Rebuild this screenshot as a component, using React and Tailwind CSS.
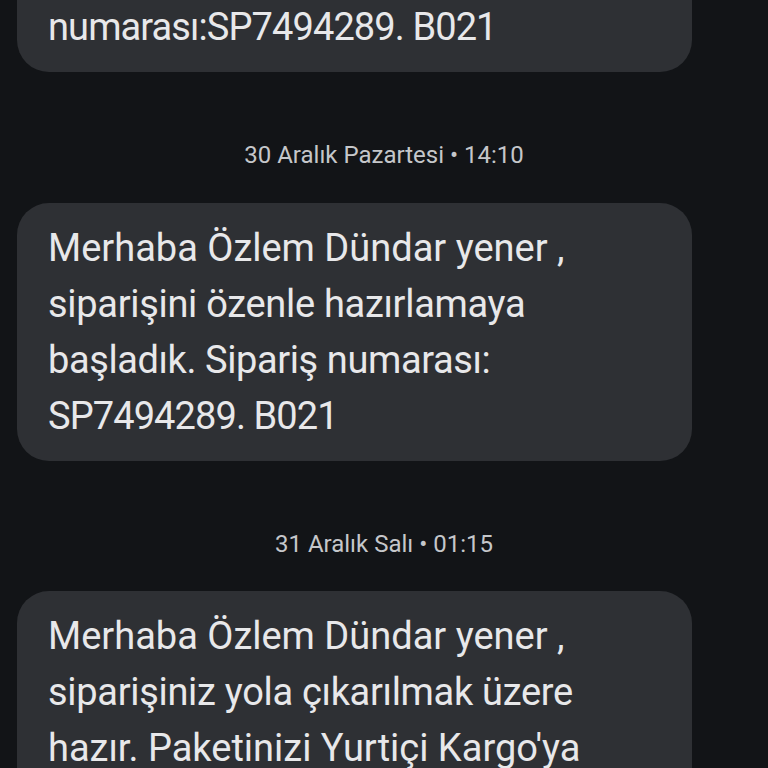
export default function App() {
  const font = { fontFamily: "Roboto, 'Noto Sans', sans-serif" };
  return (
    <div className="w-[768px] h-[768px] overflow-hidden bg-[#121417]" style={font}>
      <div className="flex flex-col -mt-[60px]">
        <div className="ml-[17px] w-[675px] rounded-[32px] bg-[#2e3034] pl-[31px] pr-[24px] pt-[59px] pb-[17px] text-[38px] leading-[56px] tracking-[-0.9px] text-[#e8e8ea]">
          numarası:SP7494289. B021
        </div>
        <div className="mt-[67px] h-[32px] flex items-center justify-center text-[24px] leading-[32px] text-[#c5c7ca]">
          30 Aralık Pazartesi • 14:10
        </div>
        <div className="mt-[32px] ml-[17px] w-[675px] rounded-[32px] bg-[#2e3034] pl-[31px] pr-[24px] py-[17px] text-[38px] leading-[56px] text-[#e8e8ea]">
          <div>Merhaba Özlem Dündar yener ,</div>
          <div className="tracking-[-0.3px]">siparişini özenle hazırlamaya</div>
          <div className="tracking-[-0.4px]">başladık. Sipariş numarası:</div>
          <div className="tracking-[-0.9px]">SP7494289. B021</div>
        </div>
        <div className="mt-[67px] h-[32px] flex items-center justify-center text-[24px] leading-[32px] text-[#c5c7ca]">
          31 Aralık Salı • 01:15
        </div>
        <div className="mt-[31px] ml-[17px] w-[675px] rounded-[32px] bg-[#2e3034] pl-[31px] pr-[24px] pt-[17px] pb-[40px] text-[38px] leading-[56px] text-[#e8e8ea]">
          <div>Merhaba Özlem Dündar yener ,</div>
          <div className="tracking-[-0.3px]">siparişiniz yola çıkarılmak üzere</div>
          <div>hazır. Paketinizi Yurtiçi Kargo'ya</div>
        </div>
      </div>
    </div>
  );
}
